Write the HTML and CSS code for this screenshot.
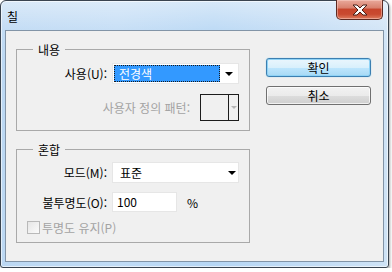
FILE: index.html
```html
<!DOCTYPE html>
<html lang="ko">
<head>
<meta charset="utf-8">
<title>칠</title>
<link rel="stylesheet" href="styles.css">
</head>
<body>
<div class="window">
  <div class="titlebar">
    <span class="title">칠</span>
    <div class="close">
      <svg width="16" height="12" viewBox="0 0 16 12">
        <polygon points="1,1 5,1 8,4 11,1 15,1 10,6 15,11 11,11 8,8 5,11 1,11 6,6" fill="#ffffff" stroke="#4a2018" stroke-width="1" stroke-linejoin="round"/>
      </svg>
    </div>
  </div>
  <div class="client">
    <div class="left">
      <fieldset class="group g1">
        <legend>내용</legend>
        <div class="row">
          <span class="lbl">사용(U):</span>
          <div class="select">
            <span class="sel-hl">전경색</span>
            <span class="arrow-box"><span class="arrow"></span></span>
          </div>
        </div>
        <div class="row pattern-row">
          <span class="dis">사용자 정의 패턴:</span>
          <div class="pattern">
            <span class="pat-swatch"></span>
            <span class="pat-btn"><span class="arrow grey"></span></span>
          </div>
        </div>
      </fieldset>
      <fieldset class="group g2">
        <legend>혼합</legend>
        <div class="row">
          <span class="lbl">모드(M):</span>
          <div class="select plain">
            <span class="sel-text">표준</span>
            <span class="arrow-box"><span class="arrow"></span></span>
          </div>
        </div>
        <div class="row op-row">
          <span class="lbl">불투명도(O):</span>
          <div class="input">100</div>
          <span class="pct">%</span>
        </div>
        <div class="row check-row">
          <span class="checkbox"></span>
          <span class="dis">투명도 유지(P)</span>
        </div>
      </fieldset>
    </div>
    <div class="right">
      <div class="btn default">확인</div>
      <div class="btn">취소</div>
    </div>
  </div>
</div>
</body>
</html>
```

FILE: styles.css
```css
html, body {
  margin: 0;
  padding: 0;
  background: #ffffff;
}
body {
  font-family: "Noto Sans CJK KR", "Noto Sans", sans-serif;
  font-size: 12px;
  color: #000;
}
.window {
  width: 389px;
  height: 268px;
  box-sizing: border-box;
  border: 1px solid #3a4450;
  border-radius: 6px 6px 3px 3px;
  background:
    linear-gradient(180deg, rgba(255,255,255,0.45) 0, rgba(255,255,255,0.1) 30px, rgba(255,255,255,0) 60px),
    linear-gradient(90deg, #bcd8f3 0%, #c0dbf5 30%, #b6d6f4 55%, #c2dcf5 80%, #cfe3f6 100%);
  padding: 0 4px 5px 4px;
  display: flex;
  flex-direction: column;
  box-shadow: inset 0 0 0 1px rgba(255,255,255,0.6), 1px 2px 3px rgba(0,0,0,0.35);
}
.titlebar {
  height: 29px;
  display: flex;
  align-items: flex-start;
}
.title {
  flex: 1;
  margin: 9px 0 0 2px;
  line-height: 14px;
  font-size: 12px;
}
.close {
  width: 47px;
  height: 20px;
  margin: -1px 1px 0 0;
  box-sizing: border-box;
  border: 1px solid #5d2a22;
  border-top: none;
  border-radius: 0 0 5px 5px;
  background: linear-gradient(180deg, #e9a99b 0%, #d9826f 40%, #c7452c 50%, #c94a30 75%, #dd7b5e 100%);
  display: flex;
  align-items: center;
  justify-content: center;
  box-shadow: inset 0 0 0 1px rgba(255,220,210,0.45);
}
.close svg { display: block; margin-top: 1px; }
.client {
  height: 232px;
  box-sizing: border-box;
  border: 1px solid #8294a7;
  background: #f0f0f0;
  display: flex;
  padding: 10px 0 0 10px;
}
.left {
  width: 234px;
  display: flex;
  flex-direction: column;
  gap: 10px;
}
.group {
  margin: 0;
  width: 234px;
  box-sizing: border-box;
  border: 1px solid #a9a9a9;
  min-width: 0;
  padding: 0 10px 0 0;
}
.group legend {
  margin-left: 16px;
  padding: 0 5px;
  line-height: 17px;
  font-size: 12px;
}
.g1 { padding-top: 5px; padding-bottom: 9px; }
.g2 { padding-top: 4px; padding-bottom: 7px; }
.row {
  display: flex;
  align-items: center;
}
.lbl {
  width: 90px;
  text-align: right;
  margin-right: 5px;
  white-space: nowrap;
}
.dis { color: #a3a3a3; white-space: nowrap; }
.select {
  width: 127px;
  height: 21px;
  box-sizing: border-box;
  background: #ffffff;
  border: 1px solid #e6e6e6;
  display: flex;
  align-items: stretch;
  padding: 1px;
}
.sel-hl {
  width: 106px;
  box-sizing: border-box;
  background: #3399ff;
  color: #fff;
  border: 1px dotted #1a1a1a;
  padding-left: 4px;
  line-height: 15px;
}
.sel-text {
  width: 106px;
  padding-left: 6px;
  line-height: 17px;
}
.arrow-box {
  flex: 1;
  display: flex;
  align-items: center;
  justify-content: center;
}
.arrow {
  width: 0;
  height: 0;
  border-left: 4px solid transparent;
  border-right: 4px solid transparent;
  border-top: 4px solid #000;
}
.arrow.grey {
  border-left-width: 3px;
  border-right-width: 3px;
  border-top: 3px solid #b5b5b5;
}
.pattern-row {
  justify-content: flex-end;
  margin-top: 10px;
}
.pattern {
  margin-left: 10px;
  width: 39px;
  height: 27px;
  box-sizing: border-box;
  border: 1px solid #1c1c1c;
  display: flex;
}
.pat-swatch {
  width: 27px;
  border-right: 1px solid #1c1c1c;
}
.pat-btn {
  flex: 1;
  display: flex;
  align-items: center;
  justify-content: center;
}
.op-row { margin-top: 9px; }
.input {
  width: 65px;
  height: 20px;
  box-sizing: border-box;
  background: #fff;
  border: 1px solid #e6e6e6;
  padding-left: 4px;
  line-height: 18px;
}
.pct { margin-left: 10px; }
.check-row {
  margin-top: 7px;
  height: 16px;
  padding-left: 10px;
}
.checkbox {
  width: 13px;
  height: 13px;
  box-sizing: border-box;
  border: 1px solid #b9b9b9;
  background: linear-gradient(135deg, #e6e6e6, #fbfbfb);
  margin-right: 2px;
}
.right {
  margin-left: 16px;
  padding-top: 17px;
  display: flex;
  flex-direction: column;
  gap: 9px;
}
.btn {
  width: 105px;
  height: 19px;
  box-sizing: border-box;
  border: 1px solid #707070;
  border-radius: 3px;
  background: linear-gradient(180deg, #f2f2f2 0%, #ebebeb 50%, #dddddd 51%, #cfcfcf 100%);
  box-shadow: inset 0 0 0 1px rgba(255,255,255,0.7);
  text-align: center;
  line-height: 17px;
}
.btn.default {
  border-color: #3c7fb1;
  background: linear-gradient(180deg, #eaf6fd 0%, #d9f0fc 50%, #bee6fd 51%, #a7d9f5 100%);
  box-shadow: inset 0 0 0 1px #8fd3f6, 0 0 1px #5ac4f0;
}
```
